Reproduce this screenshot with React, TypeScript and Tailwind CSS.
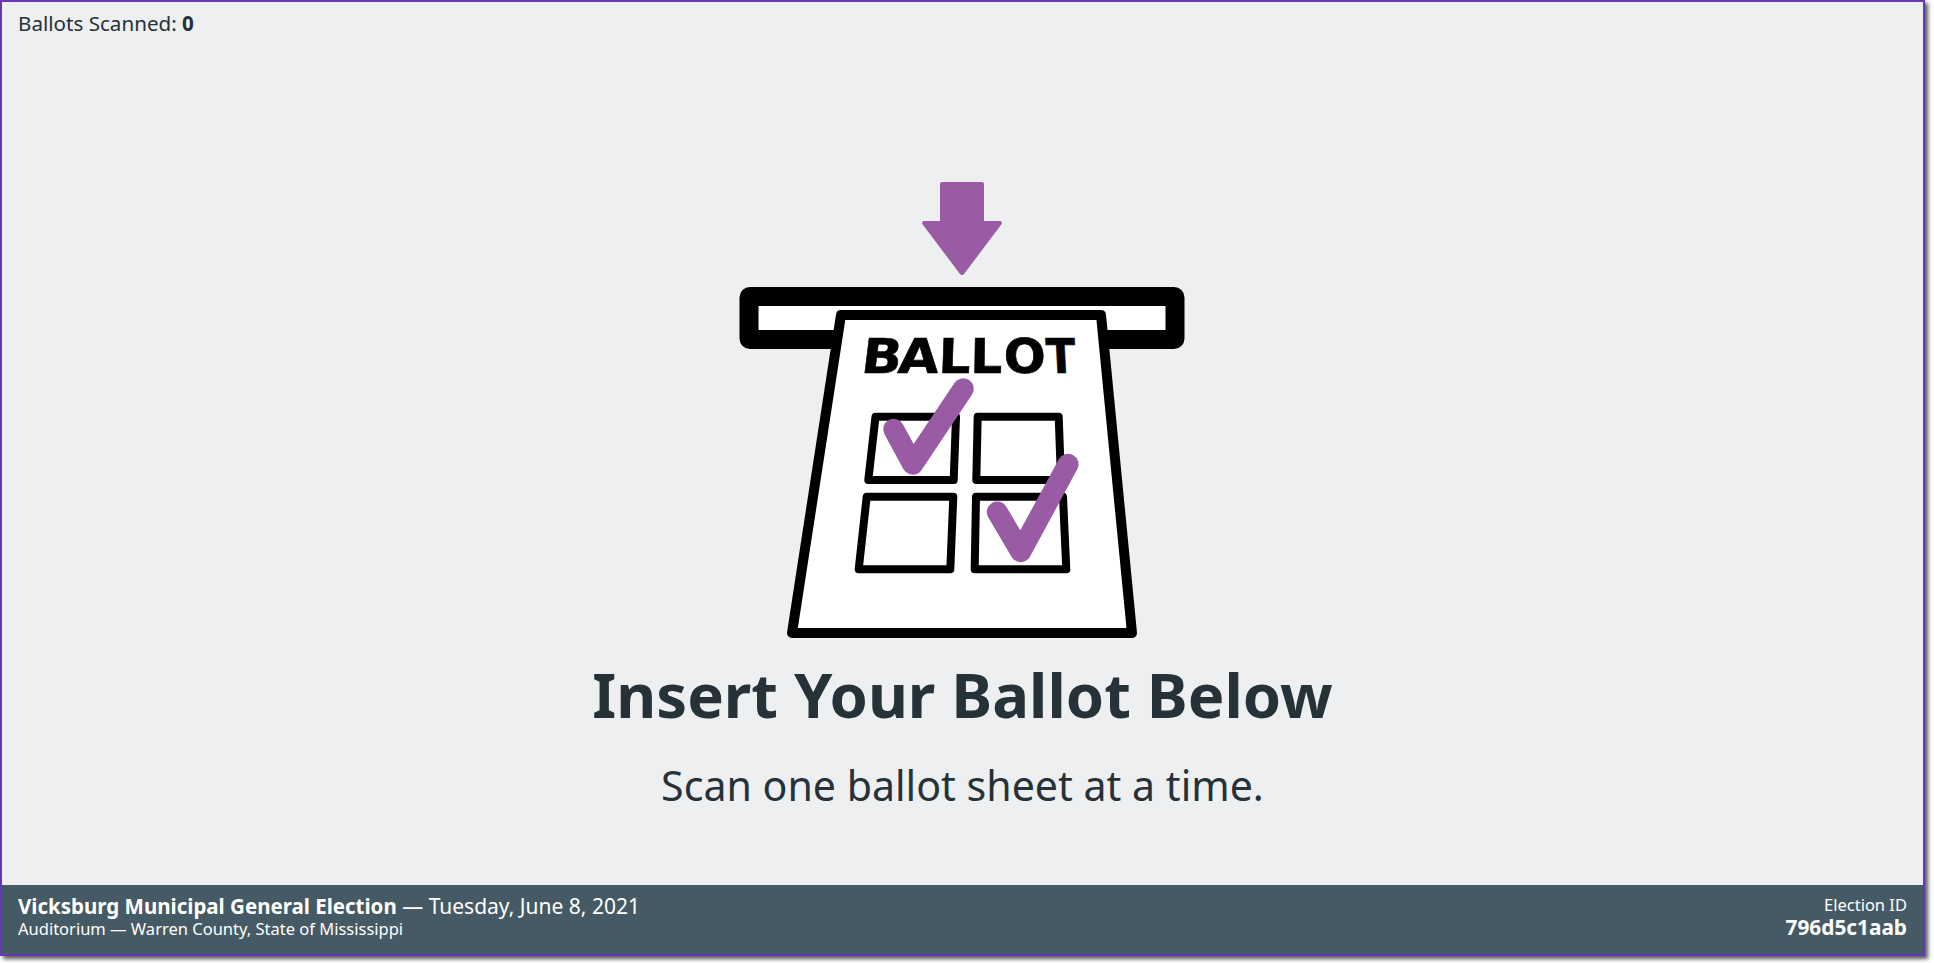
const CHECK = '#9a5ba5';

const BOXES = [
  '875.5,415.8 956,415.8 953.7,479 868.3,479',
  '977.7,415.8 1058.7,415.8 1061,479 976.3,479',
  '866.7,495.7 953.3,495.7 950.3,568.3 858.7,568.3',
  '976,495.7 1063,495.7 1066.3,568.3 974.7,568.3',
];

// letters lean a bit differently across the sheet, same as the drawing
const LETTERS = [
  { c: 'B', x: 860, skew: -7, sx: 1.1 },
  { c: 'A', x: 897, skew: -5, sx: 1.1 },
  { c: 'L', x: 938, skew: -2, sx: 1.05 },
  { c: 'L', x: 970, skew: -1, sx: 1.05 },
  { c: 'O', x: 1004, skew: 1, sx: 1.03 },
  { c: 'T', x: 1047, skew: 3, sx: 0.9 },
];

function BallotIllustration() {
  return (
    <svg viewBox="736 177 454 464" className="h-[464px] w-[454px] shrink-0">
      <path d="M940 183a2 2 0 0 1 2-2h40a2 2 0 0 1 2 2v37h16a2 2 0 0 1 1.500 3.200L964 273a2.500 2.500 0 0 1-4 0l-37.500-49.800A2 2 0 0 1 924 220h16z" fill={CHECK} />
      <rect x="749" y="295.500" width="426" height="43" rx="1" fill="#fff" stroke="#000" strokeWidth="19" strokeLinejoin="round" />
      <polygon points="841,314 1101,314 1132,632 792,632" fill="#fff" stroke="#000" strokeWidth="10" strokeLinejoin="round" />
      <g opacity="0.99">
        {LETTERS.map((l, i) => (
          <text
            key={i}
            transform={`translate(${l.x} 371.500) skewX(${l.skew}) scale(${l.sx} 1)`}
            fontFamily="'DejaVu Sans', sans-serif"
            fontWeight="700"
            fontSize="48"
            fill="#000"
            stroke="#000"
            strokeWidth="0.6"
          >
            {l.c}
          </text>
        ))}
      </g>
      {BOXES.map((points) => (
        <polygon key={points} points={points} fill="none" stroke="#000" strokeWidth="8" strokeLinejoin="round" />
      ))}
      <polyline points="893.700,428.300 912.700,463.300 963.300,387.700" fill="none" stroke={CHECK} strokeWidth="21" strokeLinecap="round" strokeLinejoin="round" />
      <polyline points="997.300,511 1020.700,550.700 1068,463.300" fill="none" stroke={CHECK} strokeWidth="21" strokeLinecap="round" strokeLinejoin="round" />
    </svg>
  );
}

export default function App() {
  return (
    <div className="h-[963px] w-[1934px] overflow-hidden bg-white font-['Noto_Sans',sans-serif]">
      <div className="flex h-[956px] w-[1925px] flex-col border-2 border-[#6638b6] bg-[#edeff1] text-[#263238] shadow-[3px_3px_4px_rgba(0,0,0,0.65)]">
        <div className="px-4 pt-[8px] text-[20.6px] leading-[27px]">
          Ballots Scanned: <strong>0</strong>
        </div>
        <main className="flex flex-1 flex-col items-center justify-center pt-[72px]">
          <BallotIllustration />
          <h1 className="mt-[7px] text-[61.5px] font-bold leading-[90px]">Insert Your Ballot Below</h1>
          <p className="mt-[15px] text-[41.1px] font-normal leading-[63px]">Scan one ballot sheet at a time.</p>
        </main>
        <footer className="flex h-[69px] items-center justify-between bg-[#455a64] px-4 pb-[6px] text-white">
          <div>
            <div className="text-[21px] leading-[25px]">
              <strong className="text-[20.5px]">Vicksburg Municipal General Election</strong> — Tuesday, June 8, 2021
            </div>
            <div className="text-[16.5px] leading-[20px]">Auditorium — Warren County, State of Mississippi</div>
          </div>
          <div className="text-right">
            <div className="text-[16.5px] leading-[20px]">Election ID</div>
            <div className="text-[20.8px] font-bold leading-[24px]">796d5c1aab</div>
          </div>
        </footer>
      </div>
    </div>
  );
}
